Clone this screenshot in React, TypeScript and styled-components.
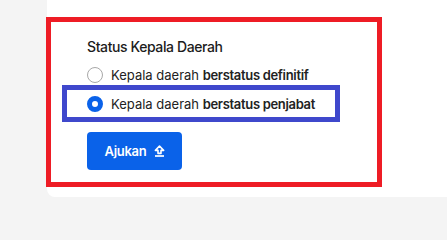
import React, { useState } from "react";
import styled, { createGlobalStyle } from "styled-components";

const Global = createGlobalStyle`
  html, body { margin: 0; padding: 0; background: #f4f4f4; }
  body { font-family: Inter, "Noto Sans", sans-serif; color: #1c1c1c; }
  * { box-sizing: border-box; }
`;

const Page = styled.div`
  display: flex;
  width: 447px;
  height: 210px;
  overflow: hidden;
  padding-left: 47px;
`;

const Card = styled.div`
  background: #ffffff;
  width: 440px;
  height: 197px;
  flex-shrink: 0;
  border-bottom-left-radius: 8px;
  padding-top: 17px;
`;

const Section = styled.div`
  width: 336px;
  height: 170px;
  border: 5px solid #ee1c25;
  margin-left: -1px;
  padding: 15px 0 0 36px;
  display: flex;
  flex-direction: column;
`;

const Title = styled.div`
  font-size: 14px;
  line-height: 20px;
  font-weight: 500;
  letter-spacing: -0.4px;
  color: #1c1c1c;
  margin-bottom: 8px;
`;

const Highlight = styled.div`
  width: 278px;
  height: 37px;
  border: 5px solid #3f48cc;
  margin-left: -25px;
  padding-left: 20px;
  display: flex;
  align-items: center;
`;

const Option = styled.label`
  display: flex;
  align-items: center;
  gap: 8px;
  height: 20px;
  font-size: 13px;
  color: #222;
  cursor: pointer;
  white-space: nowrap;
`;

const Strong = styled.b`
  font-weight: 600;
  letter-spacing: -0.32px;
`;

const Radio = styled.span<{ $checked: boolean }>`
  width: 16px;
  height: 16px;
  border-radius: 50%;
  flex-shrink: 0;
  background: #fff;
  border: ${(p) => (p.$checked ? "5px solid #0a62e9" : "1px solid #a8a8a8")};
`;

const Button = styled.button`
  margin-top: 10px;
  width: 95px;
  height: 38px;
  border: none;
  border-radius: 4px;
  background: #0a62e9;
  color: #fff;
  font-family: Inter, "Noto Sans", sans-serif;
  font-size: 13px;
  font-weight: 600;
  letter-spacing: -0.3px;
  display: flex;
  align-items: center;
  justify-content: center;
  gap: 8px;
  padding: 0 0 0 1px;
`;

const UploadIcon = () => (
  <svg width="11" height="12" viewBox="0 0 11 12" fill="none">
    <path
      d="M5.5 1 L9.6 5.4 H7 V8.4 H4 V5.4 H1.4 Z"
      stroke="#fff"
      strokeWidth="1.6"
      strokeLinejoin="round"
    />
    <path d="M1 11 H10" stroke="#fff" strokeWidth="1.7" />
  </svg>
);

export default function App() {
  const [value, setValue] = useState("penjabat");
  return (
    <>
      <Global />
      <Page>
        <Card>
          <Section>
            <Title>Status Kepala Daerah</Title>
            <Option onClick={() => setValue("definitif")}>
              <Radio $checked={value === "definitif"} />
              <span>
                Kepala daerah <Strong>berstatus definitif</Strong>
              </span>
            </Option>
            <Highlight>
              <Option onClick={() => setValue("penjabat")}>
                <Radio $checked={value === "penjabat"} />
                <span>
                  Kepala daerah <Strong>berstatus penjabat</Strong>
                </span>
              </Option>
            </Highlight>
            <Button>
              Ajukan <UploadIcon />
            </Button>
          </Section>
        </Card>
      </Page>
    </>
  );
}
